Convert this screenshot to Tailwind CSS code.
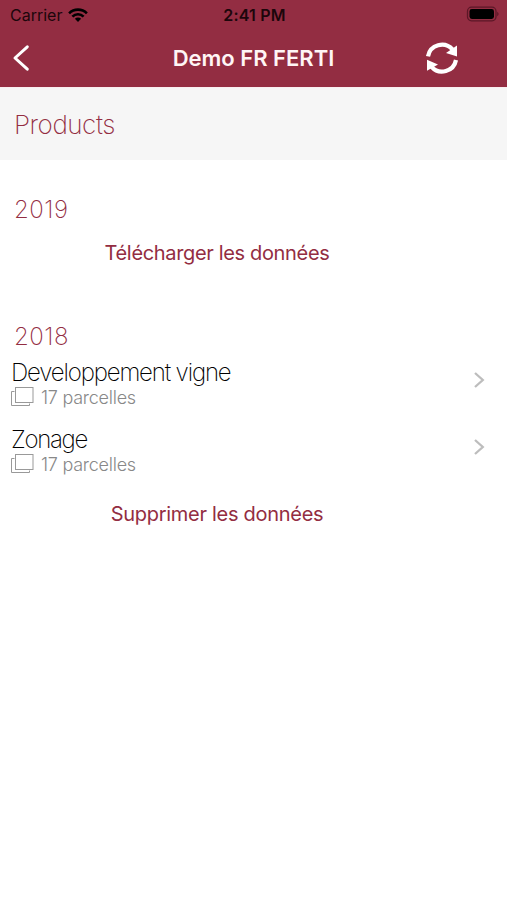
<!DOCTYPE html>
<html lang="fr">
  <head>
    <meta charset="UTF-8" />
    <meta name="viewport" content="width=device-width, initial-scale=1.0" />
    <title>Demo FR FERTI</title>
    <script src="https://cdn.jsdelivr.net/npm/@tailwindcss/browser@4"></script>
  </head>

  <body class="bg-white font-['Inter',sans-serif] antialiased overflow-hidden">
    <!-- Header -->
    <header class="h-[87px] bg-[#932d42]">
      <div class="grid grid-cols-3 items-center h-[30px] pl-[10px] pr-[8px] text-[#1c060b]">
        <div class="flex items-center gap-[6px]">
          <span class="text-[16px]">Carrier</span>
          <svg class="w-[20px] h-[14px]" viewBox="0 0 20 14" fill="none" stroke="#000" stroke-width="2.6">
            <path d="M1.1 5.3a12.6 12.6 0 0 1 17.8 0" />
            <path d="M4.4 8.6a7.9 7.9 0 0 1 11.2 0" />
            <path d="M10 14l-3.1-3.2a4.4 4.4 0 0 1 6.2 0z" fill="#000" stroke="none" />
          </svg>
        </div>
        <span class="text-center text-[16px] font-semibold whitespace-nowrap tracking-[0.2px]">2:41 PM</span>
        <svg class="justify-self-end w-[33px] h-[16px] -mt-[2px]" viewBox="0 0 33 16">
          <rect x="1.5" y="1.2" width="28.5" height="13.6" rx="4" fill="none" stroke="#5c1727" stroke-width="1.3" />
          <rect x="3.5" y="3.1" width="24.5" height="9.8" rx="2.3" fill="#000" />
          <path d="M31.2 5.8v4.4q1.4-.7 1.4-2.2t-1.4-2.2z" fill="#5c1727" />
        </svg>
      </div>
      <div class="grid grid-cols-[100px_1fr_100px] items-center h-[56px]">
        <button class="pl-[12px]">
          <svg class="w-[18px] h-[28px]" viewBox="0 0 18 28" fill="none" stroke="#fff" stroke-width="3" stroke-linecap="round" stroke-linejoin="round">
            <path d="M15.3 2.8L3 14l12.3 11.2" />
          </svg>
        </button>
        <h1 class="text-center text-[22px] font-semibold text-[#fff5f5]">Demo FR FERTI</h1>
        <button class="pl-[18px]">
          <svg class="w-[34px] h-[34px]" viewBox="0 0 34 34" fill="none" stroke="#fff" stroke-width="4.2">
            <path d="M3 15.3A14.2 14.2 0 0 1 27.5 8.5" />
            <path d="M31 19A14.2 14.2 0 0 1 6.5 25.8" />
            <path d="M32 4.6v10.8l-11-3.4z" fill="#fff" stroke="none" />
            <path d="M2 18.8l11 4.6-11 6.4z" fill="#fff" stroke="none" />
          </svg>
        </button>
      </div>
    </header>

    <!-- Section title -->
    <div class="flex items-center h-[73px] pl-[14px] bg-[#f6f6f6] border-t border-[#f9eef0]">
      <h2 class="text-[26px] font-extralight text-[#932d42] tracking-[-0.45px]">Products</h2>
    </div>

    <!-- 2019 -->
    <section class="pt-[34px]">
      <h3 class="h-[32px] leading-[32px] pl-[14px] text-[24px] font-extralight text-[#932d42] tracking-[0.5px]">2019</h3>
      <button class="block w-[434px] h-[54px] text-center text-[20px] text-[#932d42] tracking-[-0.34px]">Télécharger les données</button>
    </section>

    <!-- 2018 -->
    <section class="pt-[41px]">
      <h3 class="h-[32px] leading-[32px] pl-[14px] text-[24px] font-extralight text-[#932d42] tracking-[0.5px]">2018</h3>
      <ul class="pt-[6px]">
        <li class="flex items-start justify-between h-[67px] pl-[11px] pr-[21px]">
          <div>
            <p class="h-[27px] leading-[27px] text-[24px] font-extralight text-black tracking-[-1.15px]">Developpement vigne</p>
            <div class="flex items-center h-[22px] gap-[7px]">
              <svg class="w-[23px] h-[20px]" viewBox="0 0 23 20" fill="none" stroke="#999" stroke-width="1">
                <rect x="4.5" y=".5" width="17.5" height="15" />
                <path d="M3.5 4.5h-3v14h18v-2" />
              </svg>
              <span class="text-[18px] font-light text-[#888] tracking-[-0.25px]">17 parcelles</span>
            </div>
          </div>
          <svg class="w-[14px] h-[18px] mt-[12px]" viewBox="0 0 14 18" fill="none" stroke="#bdbdbd" stroke-width="2.3">
            <path d="M3 2l7.8 7L3 16" />
          </svg>
        </li>
        <li class="flex items-start justify-between h-[67px] pl-[11px] pr-[21px]">
          <div>
            <p class="h-[27px] leading-[27px] text-[24px] font-extralight text-black tracking-[-1.3px]">Zonage</p>
            <div class="flex items-center h-[22px] gap-[7px]">
              <svg class="w-[23px] h-[20px]" viewBox="0 0 23 20" fill="none" stroke="#999" stroke-width="1">
                <rect x="4.5" y=".5" width="17.5" height="15" />
                <path d="M3.5 4.5h-3v14h18v-2" />
              </svg>
              <span class="text-[18px] font-light text-[#888] tracking-[-0.25px]">17 parcelles</span>
            </div>
          </div>
          <svg class="w-[14px] h-[18px] mt-[12px]" viewBox="0 0 14 18" fill="none" stroke="#bdbdbd" stroke-width="2.3">
            <path d="M3 2l7.8 7L3 16" />
          </svg>
        </li>
      </ul>
      <button class="block w-[434px] h-[54px] -mt-[6px] text-center text-[20px] text-[#932d42] tracking-[-0.28px]">Supprimer les données</button>
    </section>
  </body>
</html>
